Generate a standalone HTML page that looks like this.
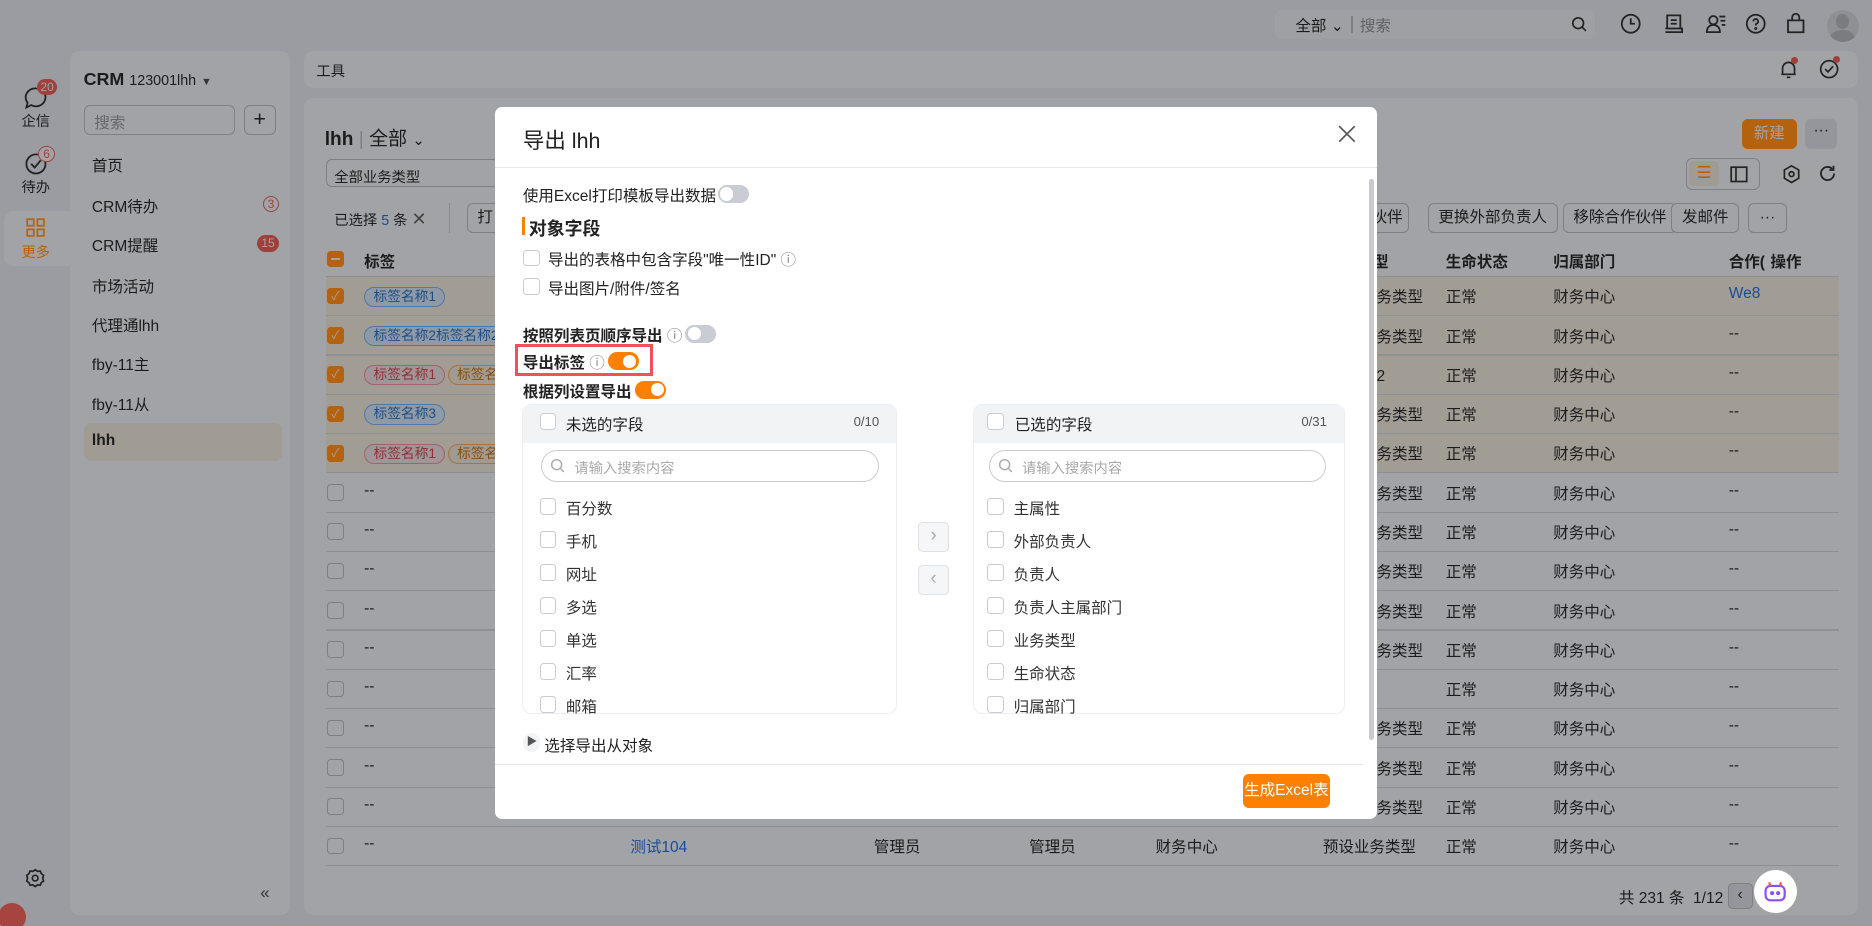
<!DOCTYPE html>
<html><head><meta charset="utf-8">
<style>
*{box-sizing:border-box;margin:0;padding:0}
html,body{width:1872px;height:926px;overflow:hidden;background:#9a9ca1}
#z{zoom:1.19388;width:1568px;height:776px;position:relative;font-family:"Liberation Sans","Noto Sans CJK SC",sans-serif;font-size:13px;color:#222}
#bg{position:absolute;left:0;top:0;width:1568px;height:776px;background:#9a9ca1;color:#1c1c1e}
.a{position:absolute}
.t{position:absolute;white-space:nowrap}
.cb{position:absolute;width:14px;height:14px;border:1px solid #c9ccd2;border-radius:3px;background:#fff}
#bg .cb{border-color:#7d7f83;background:#a2a3a7}
.cbo{position:absolute;width:14px;height:14px;border-radius:3px;background:#b5620f}
.tag{position:absolute;height:17px;border-radius:9px;font-size:11.5px;line-height:15px;padding:0 7px;white-space:nowrap}
.tb{border:1px solid #4f78a6;color:#1c4f85;background:#909aa6}
.tr{border:1px solid #a0646a;color:#903038;background:#a09597}
.to{border:1px solid #a27448;color:#8a4c10;background:#a09a91}
.btn{position:absolute;height:25px;border:1px solid #7d7f83;border-radius:5px;background:#a2a3a7;line-height:23px;padding:0 8px;font-size:13px;white-space:nowrap}
.sw{position:absolute;width:26px;height:15px;border-radius:8px}
.sw i{position:absolute;top:2px;width:11px;height:11px;border-radius:50%;background:#fff}
#md{position:absolute;left:0;top:0;width:1568px;height:776px}
</style></head><body><div id="z">
<div id="bg">
<!-- top bar -->
<div class="a" style="left:1068px;top:8px;width:268px;height:25px;background:#9fa0a4;border-radius:6px"></div>
<div class="t" style="left:1085px;top:12px">全部 ⌄</div>
<div class="a" style="left:1132px;top:13px;width:1px;height:15px;background:#7d7f83"></div>
<div class="t" style="left:1139px;top:12px;color:#606165">搜索</div>
<svg class="a" style="left:1316px;top:13px" width="14" height="14" viewBox="0 0 14 14" fill="none" stroke="#222" stroke-width="1.4"><circle cx="6" cy="6" r="4.5"/><path d="M9.5 9.5l3 3"/></svg>
<svg class="a" style="left:1357px;top:11px" width="18" height="18" viewBox="0 0 18 18" fill="none" stroke="#222" stroke-width="1.5"><circle cx="9" cy="9" r="7.5"/><path d="M9 4.5V9h3.5"/></svg>
<svg class="a" style="left:1393px;top:11px" width="18" height="18" viewBox="0 0 18 18" fill="none" stroke="#222" stroke-width="1.5"><path d="M3.5 2h11v11h-11zM2 13h14v3H2M6.5 6h5M6.5 9h5"/></svg>
<svg class="a" style="left:1428px;top:11px" width="18" height="18" viewBox="0 0 18 18" fill="none" stroke="#222" stroke-width="1.5"><circle cx="7" cy="6" r="3.5"/><path d="M1.5 16c0-4 2.5-6 5.5-6s5.5 2 5.5 6zM12 3h5M13 6.5h4M14 10h3"/></svg>
<svg class="a" style="left:1462px;top:11px" width="18" height="18" viewBox="0 0 18 18" fill="none" stroke="#222" stroke-width="1.5"><circle cx="9" cy="9" r="7.5"/><path d="M7 7a2 2 0 1 1 2.6 1.9c-.6.3-.6.8-.6 1.6"/><circle cx="9" cy="13" r=".5"/></svg>
<svg class="a" style="left:1495px;top:10px" width="18" height="19" viewBox="0 0 18 19" fill="none" stroke="#222" stroke-width="1.5"><path d="M2.5 7h13v10h-13zM6 7V4.5a3 3 0 0 1 6 0V7"/></svg>
<div class="a" style="left:1530px;top:8px;width:27px;height:27px;border-radius:50%;background:#8f9094;overflow:hidden"><div class="a" style="left:8px;top:4px;width:11px;height:12px;border-radius:50%;background:#7b7c80"></div><div class="a" style="left:3px;top:17px;width:21px;height:14px;border-radius:50%;background:#7b7c80"></div></div>
<!-- left rail -->
<svg class="a" style="left:20px;top:72px" width="20" height="20" viewBox="0 0 20 20" fill="none" stroke="#222" stroke-width="1.5"><path d="M10 2a8 7.5 0 1 1-4 14L2 18l1-4A8 7.5 0 0 1 10 2z"/></svg>
<div class="a" style="left:31px;top:66px;width:17px;height:14px;border-radius:7px;background:#a0403a;color:#a2a3a7;font-size:10px;text-align:center;line-height:14px">20</div>
<div class="t" style="left:18px;top:92px;font-size:12px">企信</div>
<svg class="a" style="left:20px;top:127px" width="20" height="20" viewBox="0 0 20 20" fill="none" stroke="#222" stroke-width="1.5"><circle cx="10" cy="10" r="8"/><path d="M6 10l3 3 5-6"/></svg>
<div class="a" style="left:32px;top:122px;width:14px;height:14px;border-radius:7px;border:1px solid #a0403a;background:#a2a3a7;color:#a0403a;font-size:10px;text-align:center;line-height:12px">6</div>
<div class="t" style="left:18px;top:147px;font-size:12px">待办</div>
<div class="a" style="left:3px;top:177px;width:56px;height:46px;background:#a2a3a7;border-radius:8px 0 0 8px"></div>
<svg class="a" style="left:22px;top:183px" width="16" height="16" viewBox="0 0 16 16" fill="none" stroke="#b5620f" stroke-width="1.4"><rect x="1" y="1" width="5.5" height="5.5"/><rect x="9.5" y="1" width="5.5" height="5.5"/><rect x="1" y="9.5" width="5.5" height="5.5"/><rect x="9.5" y="9.5" width="5.5" height="5.5"/></svg>
<div class="t" style="left:18px;top:202px;font-size:12px;color:#b5620f">更多</div>
<svg class="a" style="left:21px;top:727px" width="17" height="17" viewBox="0 0 18 18" fill="none" stroke="#222" stroke-width="1.5"><circle cx="9" cy="9" r="2.5"/><path d="M9 1.5l2 1.5 2.5-.3 1 2.3 2 1.5-.8 2.5.8 2.5-2 1.5-1 2.3-2.5-.3-2 1.5-2-1.5-2.5.3-1-2.3-2-1.5.8-2.5-.8-2.5 2-1.5 1-2.3 2.5.3z"/></svg>
<div class="a" style="left:-2px;top:756px;width:24px;height:24px;border-radius:50%;background:#a6453f"></div>
<!-- sidebar -->
<div class="a" style="left:59px;top:43px;width:184px;height:723px;background:#a2a3a7;border-radius:8px"></div>
<div class="t" style="left:70px;top:58px;font-size:15px;font-weight:bold">CRM <span style="font-size:12px;font-weight:normal">123001lhh</span> <span style="font-size:9px;color:#333">▼</span></div>
<div class="a" style="left:70px;top:88px;width:127px;height:25px;border:1px solid #808185;border-radius:5px;background:#a2a3a7"></div>
<div class="t" style="left:79px;top:93px;color:#66676b">搜索</div>
<div class="a" style="left:204px;top:88px;width:27px;height:25px;border:1px solid #7d7f83;border-radius:5px;background:#a2a3a7;text-align:center;line-height:22px;font-size:18px">+</div>
<div class="t" style="left:77px;top:129px">首页</div>
<div class="t" style="left:77px;top:163px">CRM待办</div>
<div class="a" style="left:220px;top:164px;width:14px;height:14px;border-radius:7px;border:1px solid #a0403a;color:#a0403a;font-size:10px;text-align:center;line-height:12px">3</div>
<div class="t" style="left:77px;top:196px">CRM提醒</div>
<div class="a" style="left:215px;top:197px;width:19px;height:14px;border-radius:7px;background:#a0403a;color:#a2a3a7;font-size:10px;text-align:center;line-height:14px">15</div>
<div class="t" style="left:77px;top:230px">市场活动</div>
<div class="t" style="left:77px;top:263px">代理通lhh</div>
<div class="t" style="left:77px;top:296px">fby-11主</div>
<div class="t" style="left:77px;top:329px">fby-11从</div>
<div class="a" style="left:70px;top:354px;width:166px;height:32px;background:#a09b93;border-radius:6px"></div>
<div class="t" style="left:77px;top:362px;font-weight:bold">lhh</div>
<div class="t" style="left:218px;top:740px;color:#333;font-size:14px">«</div>
<!-- tool bar -->
<div class="a" style="left:255px;top:43px;width:1301px;height:31px;background:#a2a3a7;border-radius:8px"></div>
<div class="t" style="left:265px;top:50px;font-size:12px">工具</div>
<svg class="a" style="left:1490px;top:50px" width="16" height="16" viewBox="0 0 16 16" fill="none" stroke="#222" stroke-width="1.4"><path d="M3 12V7a5 5 0 0 1 10 0v5H2h12M6.5 14.5h3"/></svg>
<div class="a" style="left:1500px;top:48px;width:6px;height:6px;border-radius:50%;background:#a0403a"></div>
<svg class="a" style="left:1524px;top:49px" width="17" height="17" viewBox="0 0 18 18" fill="none" stroke="#222" stroke-width="1.5"><circle cx="9" cy="9" r="7.5"/><path d="M5.5 9l2.5 2.5 4.5-5"/></svg>
<div class="a" style="left:1535px;top:47px;width:6px;height:6px;border-radius:50%;background:#a0403a"></div>
<!-- main panel -->
<div class="a" style="left:255px;top:82px;width:1301px;height:684px;background:#a2a3a7;border-radius:8px"></div>
<div class="t" style="left:272px;top:103px;font-size:16px"><b>lhh</b> <span style="color:#7d7f83">|</span> 全部 <span style="font-size:12px">⌄</span></div>
<div class="a" style="left:1459px;top:100px;width:46px;height:25px;background:#b5620f;border-radius:5px;color:#a2a3a7;text-align:center;line-height:25px">新建</div>
<div class="a" style="left:1512px;top:100px;width:27px;height:25px;background:#94969b;border-radius:5px;text-align:center;line-height:20px">···</div>
<div class="a" style="left:273px;top:133px;width:145px;height:24px;border:1px solid #7d7f83;border-radius:5px;background:#a2a3a7"></div>
<div class="t" style="left:280px;top:139px;font-size:12px">全部业务类型</div>
<div class="a" style="left:1412px;top:132px;width:62px;height:27px;border:1px solid #808185;border-radius:5px;background:#a2a3a7"></div>
<div class="a" style="left:1415px;top:135px;width:25px;height:21px;background:#a09b93;border-radius:4px;color:#b5620f;text-align:center;line-height:20px;font-size:14px">☰</div>
<svg class="a" style="left:1449px;top:139px" width="15" height="14" viewBox="0 0 15 14" fill="none" stroke="#222" stroke-width="1.4"><rect x="1" y="1" width="13" height="12"/><path d="M5 1v12"/></svg>
<svg class="a" style="left:1493px;top:137px" width="16" height="17" viewBox="0 0 16 17" fill="none" stroke="#222" stroke-width="1.4"><path d="M8 1.5l6 3.5v7l-6 3.5-6-3.5V5z"/><circle cx="8" cy="8.5" r="2"/></svg>
<svg class="a" style="left:1523px;top:137px" width="16" height="16" viewBox="0 0 16 16" fill="none" stroke="#222" stroke-width="1.5"><path d="M13.5 8a5.5 5.5 0 1 1-1.6-3.9M13 1.5v3.5H9.5"/></svg>
<div class="t" style="left:280px;top:175px;font-size:12px">已选择 <span style="color:#1c4f85">5</span> 条 <span style="font-size:15px;color:#444">✕</span></div>
<div class="a" style="left:376px;top:170px;width:1px;height:25px;background:#8a8b8f"></div>
<div class="btn" style="left:391px;top:170px;width:30px">打</div>
<div class="btn" style="left:1140px;top:170px;width:40px">伙伴</div>
<div class="btn" style="left:1196px;top:170px">更换外部负责人</div>
<div class="btn" style="left:1309px;top:170px">移除合作伙伴</div>
<div class="btn" style="left:1400px;top:170px">发邮件</div>
<div class="btn" style="left:1464px;top:170px;width:33px;text-align:center">···</div>
<!-- table header -->
<div class="cbo" style="left:274px;top:210px"><div class="a" style="left:3px;top:6px;width:8px;height:2px;background:#a2a3a7"></div></div>
<div class="t" style="left:305px;top:209px;font-weight:bold">标签</div>
<div class="t" style="left:1150px;top:209px;font-weight:bold">型</div>
<div class="t" style="left:1211px;top:209px;font-weight:bold">生命状态</div>
<div class="t" style="left:1301px;top:209px;font-weight:bold">归属部门</div>
<div class="t" style="left:1448px;top:209px;font-weight:bold">合作(</div>
<div class="t" style="left:1483px;top:209px;font-weight:bold">操作</div>
<div class="a" style="left:273px;top:231px;width:1267px;height:1px;background:#8c8e92"></div>
<div id="rows"></div>
<div class="t" style="left:1356px;top:742px;font-size:13px">共 231 条 &nbsp;1/12 ⌄</div>
<div class="a" style="left:1447px;top:740px;width:21px;height:21px;background:#94969b;border:1px solid #808185;border-radius:4px;text-align:center;line-height:19px">‹</div>
</div>
<div id="md">
<div class="a" style="left:1469px;top:729px;width:36px;height:36px;border-radius:50%;background:#fff"></div>
<svg class="a" style="left:1476px;top:737px" width="22" height="20" viewBox="0 0 22 20" fill="none" stroke="#8a4dff" stroke-width="1.8"><rect x="3" y="5" width="16" height="12" rx="4"/><path d="M7 5L6 2M15 5l1-3" stroke="#f0524a"/><circle cx="8.5" cy="11" r=".8" fill="#4d7dff"/><circle cx="13.5" cy="11" r=".8" fill="#4d7dff"/></svg>
<!-- modal -->
<div class="a" style="left:415px;top:90px;width:738px;height:596px;background:#fff;border-radius:6px"></div>
<div class="t" style="left:438px;top:104px;font-size:18px">导出 lhh</div>
<svg class="a" style="left:1121px;top:105px" width="15" height="15" viewBox="0 0 15 15" stroke="#555" stroke-width="1.4"><path d="M1 1l13 13M14 1L1 14"/></svg>
<div class="a" style="left:415px;top:140px;width:738px;height:1px;background:#e5e6ea"></div>
<div class="a" style="left:1147px;top:150px;width:4px;height:470px;background:#c8cacf;border-radius:2px"></div>
<div class="t" style="left:438px;top:154px">使用Excel打印模板导出数据</div>
<div class="sw" style="left:601px;top:155px;background:#c9ccd2"><i style="left:2px"></i></div>
<div class="a" style="left:437px;top:182px;width:3px;height:15px;background:#ff8000"></div>
<div class="t" style="left:443px;top:180px;font-size:15px;font-weight:bold">对象字段</div>
<div class="cb" style="left:438px;top:209px"></div>
<div class="t" style="left:459px;top:208px">导出的表格中包含字段"唯一性ID" <span style="color:#888">ⓘ</span></div>
<div class="cb" style="left:438px;top:233px"></div>
<div class="t" style="left:459px;top:232px">导出图片/附件/签名</div>
<div class="t" style="left:438px;top:271px;font-weight:bold">按照列表页顺序导出 <span style="color:#888;font-weight:normal">ⓘ</span></div>
<div class="sw" style="left:574px;top:272px;background:#c9ccd2"><i style="left:2px"></i></div>
<div class="a" style="left:431px;top:288px;width:116px;height:27px;border:3px solid #f0525a"></div>
<div class="t" style="left:438px;top:294px;font-weight:bold">导出标签 <span style="color:#888;font-weight:normal">ⓘ</span></div>
<div class="sw" style="left:509px;top:295px;background:#ff8000"><i style="left:13px"></i></div>
<div class="t" style="left:438px;top:318px;font-weight:bold">根据列设置导出</div>
<div class="sw" style="left:532px;top:319px;background:#ff8000"><i style="left:13px"></i></div>
<div class="a" style="left:437px;top:338px;width:314px;height:260px;border:1px solid #eceef1;border-radius:8px;overflow:hidden"><div class="a" style="left:0;top:0;width:314px;height:32px;background:#f2f3f5"></div></div>
<div class="cb" style="left:452px;top:346px"></div>
<div class="t" style="left:474px;top:346px">未选的字段</div>
<div class="t" style="left:715px;top:347px;font-size:11px;color:#555">0/10</div>
<div class="a" style="left:453px;top:377px;width:283px;height:27px;border:1px solid #c9ccd2;border-radius:14px"></div>
<svg class="a" style="left:461px;top:384px" width="13" height="13" viewBox="0 0 14 14" fill="none" stroke="#aaa" stroke-width="1.3"><circle cx="6" cy="6" r="4.5"/><path d="M9.5 9.5l3 3"/></svg>
<div class="t" style="left:481px;top:383px;font-size:12px;color:#aaa">请输入搜索内容</div>
<div class="a" style="left:815px;top:338px;width:312px;height:260px;border:1px solid #eceef1;border-radius:8px;overflow:hidden"><div class="a" style="left:0;top:0;width:312px;height:32px;background:#f2f3f5"></div></div>
<div class="cb" style="left:827px;top:346px"></div>
<div class="t" style="left:850px;top:346px">已选的字段</div>
<div class="t" style="left:1090px;top:347px;font-size:11px;color:#555">0/31</div>
<div class="a" style="left:828px;top:377px;width:283px;height:27px;border:1px solid #c9ccd2;border-radius:14px"></div>
<svg class="a" style="left:836px;top:384px" width="13" height="13" viewBox="0 0 14 14" fill="none" stroke="#aaa" stroke-width="1.3"><circle cx="6" cy="6" r="4.5"/><path d="M9.5 9.5l3 3"/></svg>
<div class="t" style="left:856px;top:383px;font-size:12px;color:#aaa">请输入搜索内容</div>
<div class="a" style="left:769px;top:437px;width:26px;height:25px;border:1px solid #dfe1e5;border-radius:4px;background:#f5f6f8;color:#aaa;text-align:center;line-height:22px;font-size:16px">›</div>
<div class="a" style="left:769px;top:473px;width:26px;height:25px;border:1px solid #dfe1e5;border-radius:4px;background:#f5f6f8;color:#aaa;text-align:center;line-height:22px;font-size:16px">‹</div>
<div id="items"></div>
<div class="a" style="left:438px;top:614px;width:14px;height:16px;border-radius:7px;background:#f2f3f5"></div>
<div class="t" style="left:441px;top:615px;font-size:9px;color:#555">▶</div>
<div class="t" style="left:456px;top:615px">选择导出从对象</div>
<div class="a" style="left:415px;top:640px;width:727px;height:1px;background:#e5e6ea"></div>
<div class="a" style="left:1041px;top:648px;width:73px;height:29px;background:#ff8000;border-radius:5px;color:#fff;text-align:center;line-height:29px">生成Excel表</div>
</div>
</div>
<script>
(function(){
var R=document.getElementById('rows'),h='';
var tags=[[['tb','标签名称1']],[['tb','标签名称2标签名称2']],[['tr','标签名称1'],['to','标签名称2']],[['tb','标签名称3']],[['tr','标签名称1'],['to','标签名称2']]];
var c3=['业务类型','业务类型','型2','业务类型','业务类型','业务类型','业务类型','业务类型','业务类型','业务类型','','业务类型','业务类型','业务类型'];
for(var i=0;i<15;i++){var tp=232+i*32.9,sel=i<5;
if(sel)h+='<div class="a" style="left:273px;top:'+tp+'px;width:1267px;height:32px;background:#a29d94"></div>';
h+='<div class="a" style="left:273px;top:'+(tp+32)+'px;width:1267px;height:1px;background:#8e9094"></div>';
var y=tp+9;
h+=sel?'<div class="cbo" style="left:274px;top:'+y+'px;color:#a2a3a7;font-size:10px;text-align:center;line-height:14px">✓</div>':'<div class="cb" style="left:274px;top:'+y+'px"></div>';
if(sel){var x=305;tags[i].forEach(function(t){h+='<div class="tag '+t[0]+'" style="left:'+x+'px;top:'+(tp+8)+'px">'+t[1]+'</div>';x+=t[1].length*12+10;});}
else h+='<div class="t" style="left:305px;top:'+(y-2)+'px">--</div>';
if(i==14){h+='<div class="t" style="left:528px;top:'+(y-2)+'px;color:#1c4a9c">测试104</div><div class="t" style="left:732px;top:'+(y-2)+'px">管理员</div><div class="t" style="left:862px;top:'+(y-2)+'px">管理员</div><div class="t" style="left:968px;top:'+(y-2)+'px">财务中心</div><div class="t" style="left:1108px;top:'+(y-2)+'px">预设业务类型</div>';}
else if(c3[i])h+='<div class="t" style="left:1140px;top:'+(y-2)+'px">'+c3[i]+'</div>';
h+='<div class="t" style="left:1211px;top:'+(y-2)+'px">正常</div><div class="t" style="left:1301px;top:'+(y-2)+'px">财务中心</div>';
h+=i==0?'<div class="t" style="left:1448px;top:'+(y-2)+'px;color:#1c4a9c">We8</div>':'<div class="t" style="left:1448px;top:'+(y-2)+'px">--</div>';}
R.outerHTML=h;
var L=['百分数','手机','网址','多选','单选','汇率','邮箱'],Rr=['主属性','外部负责人','负责人','负责人主属部门','业务类型','生命状态','归属部门'],s='';
for(var j=0;j<7;j++){var yy=417+j*27.7;
s+='<div class="cb" style="left:452px;top:'+yy+'px"></div><div class="t" style="left:474px;top:'+(yy-1)+'px;color:#333">'+L[j]+'</div>';
s+='<div class="cb" style="left:827px;top:'+yy+'px"></div><div class="t" style="left:849px;top:'+(yy-1)+'px;color:#333">'+Rr[j]+'</div>';}
document.getElementById('items').outerHTML=s;
})();
</script>
</body></html>
